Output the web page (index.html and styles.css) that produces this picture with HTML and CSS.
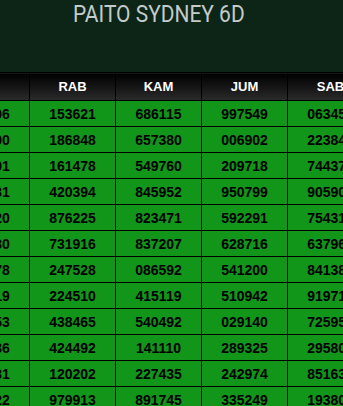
FILE: index.html
```html
<!DOCTYPE html>
<html lang="id">
<head>
<meta charset="utf-8">
<title>Paito Sydney 6D</title>
<link rel="stylesheet" href="styles.css">
</head>
<body>
<header class="hero">
  <h1 class="hero-title">PAITO SYDNEY 6D</h1>
</header>
<div class="paito">
  <table class="paito-table">
    <colgroup>
      <col class="day"><col class="day"><col class="day"><col class="day"><col class="day"><col class="day"><col class="day">
    </colgroup>
    <thead>
      <tr><th>SEN</th><th>SEL</th><th>RAB</th><th>KAM</th><th>JUM</th><th>SAB</th><th>MIN</th></tr>
    </thead>
    <tbody>
      <tr><td>512873</td><td>840206</td><td>153621</td><td>686115</td><td>997549</td><td>063452</td><td>718240</td></tr>
      <tr><td>309615</td><td>274100</td><td>186848</td><td>657380</td><td>006902</td><td>223841</td><td>560397</td></tr>
      <tr><td>847362</td><td>935291</td><td>161478</td><td>549760</td><td>209718</td><td>744376</td><td>102958</td></tr>
      <tr><td>120584</td><td>617431</td><td>420394</td><td>845952</td><td>950799</td><td>905903</td><td>384716</td></tr>
      <tr><td>693027</td><td>458620</td><td>876225</td><td>823471</td><td>592291</td><td>754318</td><td>927064</td></tr>
      <tr><td>275816</td><td>102930</td><td>731916</td><td>837207</td><td>628716</td><td>637962</td><td>481530</td></tr>
      <tr><td>938450</td><td>364178</td><td>247528</td><td>086592</td><td>541200</td><td>841385</td><td>650219</td></tr>
      <tr><td>416293</td><td>785219</td><td>224510</td><td>415119</td><td>510942</td><td>919714</td><td>273948</td></tr>
      <tr><td>854071</td><td>230653</td><td>438465</td><td>540492</td><td>029140</td><td>725950</td><td>839126</td></tr>
      <tr><td>361948</td><td>697436</td><td>424492</td><td>141110</td><td>289325</td><td>295807</td><td>104683</td></tr>
      <tr><td>702615</td><td>518031</td><td>120202</td><td>227435</td><td>242974</td><td>851639</td><td>562471</td></tr>
      <tr><td>249386</td><td>476822</td><td>979913</td><td>891745</td><td>335249</td><td>193802</td><td>718035</td></tr>
    </tbody>
  </table>
</div>
</body>
</html>
```

FILE: styles.css
```css
html, body {
  margin: 0;
  padding: 0;
  background: #0d2516;
  overflow: hidden;
}

.hero {
  height: 72px;
  background: #0d2516;
  padding-left: 73px;
}

.hero-title {
  display: inline-block;
  margin: 0;
  font-family: Roboto, "Liberation Sans", sans-serif;
  font-size: 24px;
  font-weight: 400;
  line-height: 28px;
  color: #c3cbcb;
  white-space: nowrap;
  transform: scaleX(0.873);
  transform-origin: left top;
}

.paito {
  overflow: hidden;
  background: #11961a;
}

.paito-table {
  width: 603px;
  min-width: 603px;
  margin-left: -143px;
  border-collapse: collapse;
  table-layout: fixed;
  font-family: "Liberation Sans", Arial, sans-serif;
  font-weight: 700;
}

.day {
  width: 86px;
}

.paito-table th,
.paito-table td {
  border: 1px solid #000;
  padding: 0;
  text-align: center;
  white-space: nowrap;
}

.paito-table th {
  height: 27px;
  font-size: 13px;
  color: #fff;
  background: linear-gradient(to bottom, #000 0%, #151515 50%, #2b2b2b 100%);
}

.paito-table td {
  height: 25px;
  font-size: 14px;
  color: #000;
  background: #11961a;
}
```
